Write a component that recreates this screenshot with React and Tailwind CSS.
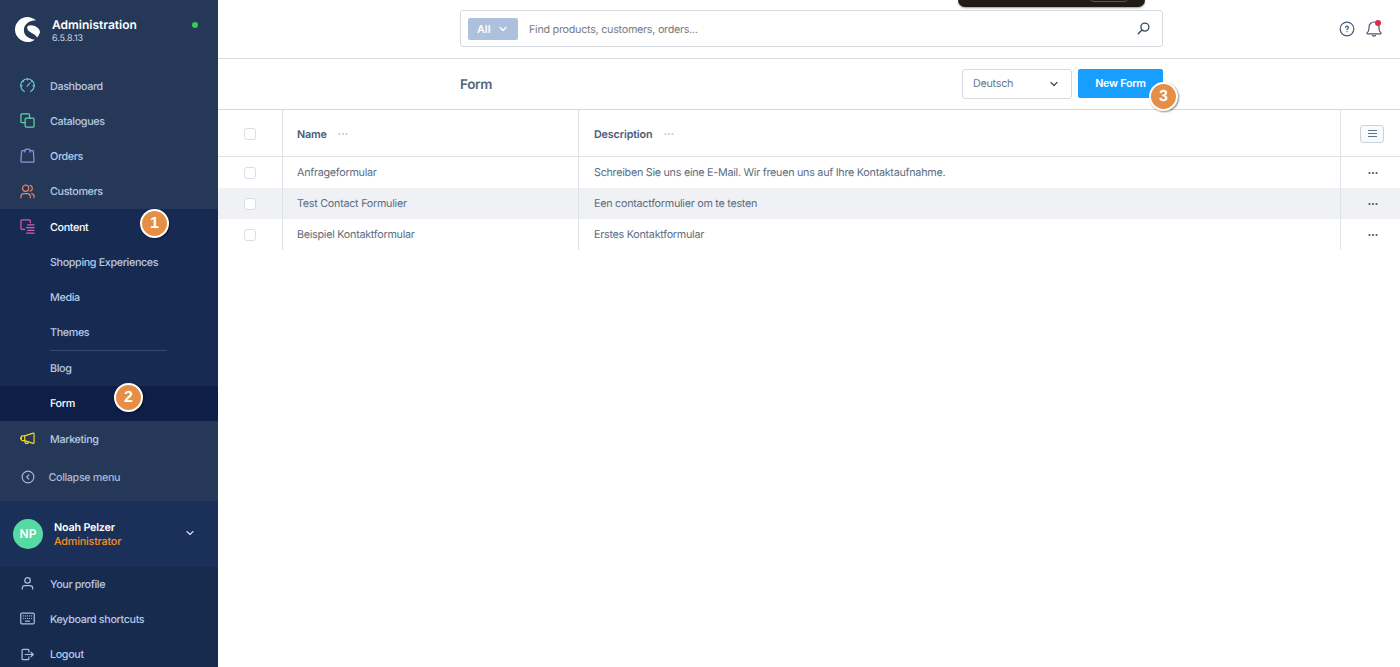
function Icon({ children, className = '', size = 15, width = 1.3 }) {
  return (
    <svg
      width={size}
      height={size}
      viewBox="0 0 16 16"
      fill="none"
      stroke="currentColor"
      strokeWidth={width}
      strokeLinecap="round"
      strokeLinejoin="round"
      className={`shrink-0 ${className}`}
    >
      {children}
    </svg>
  );
}

const icons = {
  dashboard: (
    <>
      <path d="M4.6 14.4A7.2 7.2 0 1 1 11.4 14.4" />
      <path d="M7.6 8.6L10.6 5.4M8 1v1M3 3.2l.7.7M1.2 8.2h1M13.8 8.2h1M13 3.2l-.7.7" />
    </>
  ),
  catalogues: (
    <>
      <path d="M5.5 10.2H2.1A1.1 1.1 0 0 1 1 9.1V2.1A1.1 1.1 0 0 1 2.1 1h7A1.1 1.1 0 0 1 10.2 2.1V5.5" />
      <rect x="5.5" y="5.5" width="9.5" height="9.5" rx="1.1" />
    </>
  ),
  orders: (
    <>
      <path d="M5.2 4.3V2.9H2.7A1 1 0 0 0 1.7 3.8L1 13.8A1.1 1.1 0 0 0 2.1 15H13.9A1.1 1.1 0 0 0 15 13.8L14.3 3.8A1 1 0 0 0 13.3 2.9H10.8V4.3" />
      <path d="M5.2 2.9A1.8 1.8 0 0 1 7 1.1H9A1.8 1.8 0 0 1 10.8 2.9" />
    </>
  ),
  customers: (
    <>
      <circle cx="6" cy="4.6" r="3.3" />
      <path d="M1 14.6V13.2A3.2 3.2 0 0 1 4.2 10.2H7.8A3.2 3.2 0 0 1 11 13.2V14.6" />
      <path d="M10.7 1.5A3.2 3.2 0 0 1 10.7 7.7M12.5 10.2A3.1 3.1 0 0 1 15 13.2V14.6" />
    </>
  ),
  content: (
    <>
      <path d="M5 11H2.1A1.1 1.1 0 0 1 1 9.9V2.1A1.1 1.1 0 0 1 2.1 1H9.9A1.1 1.1 0 0 1 11 2.1V4" />
      <path d="M8.3 6.3H15M7 9.2H15M8.3 12.1H15M7 15H15" />
    </>
  ),
  marketing: (
    <>
      <path d="M5 5.2L14 2.2A.8 .8 0 0 1 15 3V12.4A.8 .8 0 0 1 14 13.2L5 10.2Z" />
      <path d="M5 5.2H2.3A.8 .8 0 0 0 1.5 6V9.4A.8 .8 0 0 0 2.3 10.2H5M.7 7V8.4M4.8 10.3L6 13.3H8.2L8.9 11.6" />
    </>
  ),
  collapse: (
    <>
      <circle cx="8" cy="8" r="6.7" />
      <path d="M9 5.5L6.6 8L9 10.5" />
    </>
  ),
  profile: (
    <>
      <circle cx="8" cy="4.7" r="2.9" />
      <path d="M2.5 13.9V12.9A2.7 2.7 0 0 1 5.2 10.2H10.8A2.7 2.7 0 0 1 13.5 12.9V13.9" />
    </>
  ),
  keyboard: (
    <>
      <rect x=".8" y="2.3" width="14.4" height="11.4" rx="1.2" />
      <path d="M3.5 5.3h.1M5.7 5.3h.1M7.9 5.3h.1M10.1 5.3h.1M12.3 5.3h.1M3.5 8h.1M5.7 8h.1M7.9 8h.1M10.1 8h.1M12.3 8h.1M6 10.8h4" />
    </>
  ),
  logout: (
    <>
      <path d="M9.5 5.2V3.6A1 1 0 0 0 8.5 2.6H3.2A1 1 0 0 0 2.2 3.6V12.4A1 1 0 0 0 3.2 13.4H8.5A1 1 0 0 0 9.5 12.4V10.8" />
      <path d="M5.5 8H14M11.8 5.8L14.2 8L11.8 10.2" />
    </>
  ),
};

const mainNav = [
  { label: 'Dashboard', icon: 'dashboard', color: 'text-[#62c8dc]' },
  { label: 'Catalogues', icon: 'catalogues', color: 'text-[#57d9a3]' },
  { label: 'Orders', icon: 'orders', color: 'text-[#9391e6]' },
  { label: 'Customers', icon: 'customers', color: 'text-[#e2826c]' },
];

const userNav = [
  { label: 'Your profile', icon: 'profile' },
  { label: 'Keyboard shortcuts', icon: 'keyboard' },
  { label: 'Logout', icon: 'logout' },
];

const forms = [
  { name: 'Anfrageformular', description: 'Schreiben Sie uns eine E-Mail. Wir freuen uns auf Ihre Kontaktaufnahme.' },
  { name: 'Test Contact Formulier', description: 'Een contactformulier om te testen' },
  { name: 'Beispiel Kontaktformular', description: 'Erstes Kontaktformular' },
];

function Logo() {
  return (
    <svg width="25" height="25" viewBox="0 0 76 76" fill="#fff" className="shrink-0">
      <path d="M64 10C56 4 47 0 38 0A38 38 0 0 0 38 76C46 76 54 73 60 69C40 65 27 56 27 40C27 22 44 10 64 10Z" />
      <path d="M37 32C37 24 50 23 60 27C70 31 76 38 76 46C74 53 71 58 67 62C61 49 37 48 37 32Z" />
    </svg>
  );
}

function NavItem({ label, icon, color = 'text-[#aebfda]', active }) {
  return (
    <div className="flex h-[35.2px] shrink-0 items-center pl-5">
      <Icon className={`mb-px ${color}`}>{icons[icon]}</Icon>
      <span className={`ml-[15px] pt-[1.5px] ${active ? 'text-white' : ''}`}>{label}</span>
    </div>
  );
}

function SubItem({ label, active }) {
  return (
    <div className={`flex h-[35.2px] items-center pl-[50px] pt-px ${active ? 'bg-[#0d1f47] text-white' : ''}`}>
      {label}
    </div>
  );
}

function Marker({ number, className }) {
  return (
    <div
      className={`absolute z-10 flex size-[29px] items-center justify-center rounded-full border-2 border-white bg-[#e58e45] pt-px text-[16px] font-bold tracking-normal text-white shadow-[1px_1px_2px_rgba(0,0,0,0.45)] ${className}`}
      style={{ fontFamily: '"Liberation Sans", sans-serif' }}
    >
      {number}
    </div>
  );
}

function Chevron({ className, width = 2.2 }) {
  return (
    <Icon size={8} width={width} className={className}>
      <path d="M2 5L8 11L14 5" />
    </Icon>
  );
}

function Dots({ className }) {
  return (
    <svg width="10" height="4" viewBox="0 0 10 4" fill="currentColor" className={className}>
      <circle cx="1.5" cy="2" r="1.1" />
      <circle cx="5" cy="2" r="1.1" />
      <circle cx="8.5" cy="2" r="1.1" />
    </svg>
  );
}

function Checkbox() {
  return <div className="size-3 rounded-[3px] border border-[#d8dde6] bg-white" />;
}

function Sidebar() {
  return (
    <aside className="flex h-full w-[218px] shrink-0 flex-col bg-[#253858] font-medium tracking-[-0.36px] text-[#b7cae6]">
      <div className="flex h-[68.5px] shrink-0 items-start pl-[15px] pt-[17px]">
        <Logo />
        <div className="ml-3 pt-px tracking-normal">
          <div className="text-[12px] leading-[14px] font-semibold text-white">Administration</div>
          <div className="text-[9px] leading-[13px] font-normal tracking-[-0.1px] text-[#c4d2e6]">6.5.8.13</div>
        </div>
        <div className="ml-auto mr-[20px] mt-[5px] size-[6px] rounded-full bg-[#3cc854]" />
      </div>

      {mainNav.map((item) => (
        <NavItem key={item.label} {...item} />
      ))}

      <div className="relative shrink-0 bg-[#172b52]">
        <NavItem label="Content" icon="content" color="text-[#d75bb0]" active />
        <SubItem label="Shopping Experiences" />
        <SubItem label="Media" />
        <SubItem label="Themes" />
        <div className="ml-[50px] h-px w-[117px] bg-[#38496b]" />
        <SubItem label="Blog" />
        <SubItem label="Form" active />
        <Marker number="1" className="left-[140px] top-0" />
        <Marker number="2" className="left-[114px] top-[173.5px]" />
      </div>

      <NavItem label="Marketing" icon="marketing" color="text-[#f5d31b]" />

      <div className="flex h-[44.5px] shrink-0 items-center pb-[2px] pl-[21px] text-[#a9bad5]">
        <Icon size={14} className="mb-px">
          {icons.collapse}
        </Icon>
        <span className="ml-[13.5px] pt-px">Collapse menu</span>
      </div>

      <div className="flex h-[65.5px] shrink-0 items-center bg-[#1b3059] pl-[13px]">
        <div className="flex size-[30px] items-center justify-center rounded-full bg-[#57d9a3] text-[12px] font-semibold tracking-normal text-white">
          NP
        </div>
        <div className="ml-[11px] pt-[2px] leading-[14px] tracking-[-0.18px]">
          <div className="font-semibold text-white">Noah Pelzer</div>
          <div className="text-[#f88f25]">Administrator</div>
        </div>
        <Chevron className="mb-px ml-auto mr-[24px] text-[#d5e1f2]" />
      </div>

      <div className="flex-1 bg-[#172b4f]">
        {userNav.map((item) => (
          <NavItem key={item.label} {...item} />
        ))}
      </div>
    </aside>
  );
}

function TopBar() {
  return (
    <div className="relative flex h-[58.5px] shrink-0 items-start border-b border-[#d9dde3] pl-[242px] pt-[10px]">
      {/* notch of the overlay bar that hangs in from the top edge */}
      <div className="absolute left-[740px] top-0 h-[7px] w-[187px] overflow-hidden rounded-b-[8px] bg-[#201b14] shadow-[0_1px_2px_rgba(0,0,0,0.4)]">
        <div className="absolute -top-[8px] left-[131px] h-[10px] w-[40px] rounded-[8px] border border-[#5c5751]" />
      </div>
      <div className="flex h-[37px] w-[703px] items-center rounded-[3px] border border-[#d5d9e0] pl-[7px] pr-[12px]">
        <div className="flex h-[22px] w-[50px] items-center rounded-[2px] bg-[#adc1dc] pl-[9px] font-semibold tracking-normal text-white">
          <span className="pt-[2px]">All</span>
          <Chevron className="ml-[9px]" width={2.8} />
        </div>
        <span className="ml-[11px] pt-[2px] text-[#777b82]">Find products, customers, orders...</span>
        <Icon size={13} width={1.7} className="ml-auto text-[#3c4c68]">
          <circle cx="9.7" cy="6.3" r="4.9" />
          <path d="M6.1 9.9L1.5 14.5" />
        </Icon>
      </div>
      <div className="ml-auto mr-[18px] mt-[11px] flex gap-[11px] text-[#485971]">
        <Icon size={16} width={1.2}>
          <circle cx="8" cy="8" r="6.8" />
          <path d="M6.6 6.5A1.4 1.4 0 1 1 8.3 7.9Q8 8.1 8 8.7M8 10.6V10.7" />
        </Icon>
        <div className="relative">
          <Icon size={16} width={1.2}>
            <path d="M2.3 12.9Q.8 12.9 .9 11.9Q3 10.5 3 7.5V6A5 5 0 0 1 13 6V7.5Q13 10.5 15.1 11.9Q15.2 12.9 13.7 12.9Z" />
            <path d="M6.5 14.5Q8 15.7 9.5 14.5" />
          </Icon>
          <div className="absolute -top-px right-px size-[6px] rounded-full bg-[#de294c]" />
        </div>
      </div>
    </div>
  );
}

function PageHeader() {
  return (
    <div className="relative flex h-[51.5px] shrink-0 items-center border-b border-[#d1d9e0] pl-[242px]">
      <h1 className="pt-[2px] text-[13.5px] font-semibold tracking-[-0.3px] text-[#52667a]">Form</h1>
      <div className="ml-auto flex h-[30px] w-[110px] items-center justify-between rounded-[3px] border border-[#d5d9e0] pl-[10px] pr-[13px] text-[#68788e]">
        Deutsch
        <Chevron className="text-[#3c4c68]" width={2.4} />
      </div>
      <button className="ml-[6px] mr-[237px] h-[29px] w-[85px] rounded-[2px] bg-[#189eff] font-semibold text-white">
        New Form
      </button>
      <Marker number="3" className="left-[931px] top-[23px]" />
    </div>
  );
}

function FormTable() {
  return (
    <div className="text-[#5b6c82]">
      <div className="grid h-[47px] grid-cols-[65px_296px_762px_1fr] border-b border-[#dfe2e7] font-semibold tracking-[-0.14px] text-[#4a5a78]">
        <div className="flex items-center border-r border-[#dfe2e7] pl-[26px] pt-px">
          <Checkbox />
        </div>
        <div className="flex items-center border-r border-[#dfe2e7] pl-[14px] pt-px">
          <span className="pt-[2px]">Name</span>
          <Dots className="ml-[11px] text-[#c4cad4]" />
        </div>
        <div className="flex items-center border-r border-[#dfe2e7] pl-[15px] pt-px">
          <span className="pt-[2px]">Description</span>
          <Dots className="ml-3 text-[#c4cad4]" />
        </div>
        <div className="flex items-center pl-[19px] pt-px">
          <div className="flex h-[18px] w-[24px] items-center justify-center rounded-[3px] border border-[#cbd2dc] bg-[#f8fafc]">
            <svg width="9" height="9" viewBox="0 0 9 9" stroke="#60738f" strokeWidth="1.1">
              <path d="M0 1.5H9M0 4.5H9M0 7.5H9" />
            </svg>
          </div>
        </div>
      </div>
      <div>
        {forms.map((form) => (
          <div key={form.name} className="grid h-[31px] grid-cols-[65px_296px_762px_1fr] even:bg-[#f0f1f5]">
            <div className="flex items-center border-r border-[#dfe2e7] pl-[26px]">
              <Checkbox />
            </div>
            <div className="flex items-center border-r border-[#dfe2e7] pl-[14px] pt-px">{form.name}</div>
            <div className="flex items-center border-r border-[#dfe2e7] pl-[15px] pt-px">{form.description}</div>
            <div className="flex items-center pl-[27px] pt-px">
              <Dots className="text-[#44546f]" />
            </div>
          </div>
        ))}
      </div>
    </div>
  );
}

export default function App() {
  return (
    <div
      className="flex h-[667px] w-[1400px] overflow-hidden bg-white text-[10.75px] leading-[14px] tracking-[-0.26px] [text-rendering:geometricPrecision]"
      style={{ fontFamily: 'Inter, sans-serif' }}
    >
      <Sidebar />
      <main className="flex min-w-0 flex-1 flex-col">
        <TopBar />
        <PageHeader />
        <FormTable />
      </main>
    </div>
  );
}
